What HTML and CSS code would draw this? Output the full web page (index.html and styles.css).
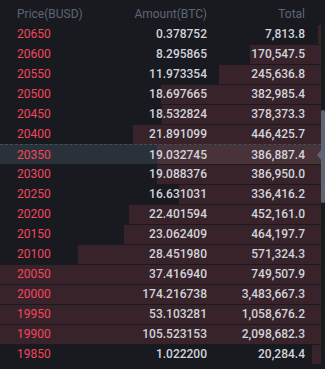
FILE: index.html
```html
<!DOCTYPE html>
<html>
<head>
<meta charset="utf-8">
<link rel="stylesheet" href="styles.css">
</head>
<body>
<div class="book">
  <div class="table">
    <div class="head">
      <span>Price(BUSD)</span>
      <span class="r">Amount(BTC)</span>
      <span class="r">Total</span>
    </div>
    <div class="row"><div class="bar" style="width:3px"></div><span class="p">20650</span><span class="r">0.378752</span><span class="r">7,813.8</span></div>
    <div class="row"><div class="bar" style="width:71px"></div><span class="p">20600</span><span class="r">8.295865</span><span class="r">170,547.5</span></div>
    <div class="row"><div class="bar" style="width:102px"></div><span class="p">20550</span><span class="r">11.973354</span><span class="r">245,636.8</span></div>
    <div class="row"><div class="bar" style="width:160px"></div><span class="p">20500</span><span class="r">18.697665</span><span class="r">382,985.4</span></div>
    <div class="row"><div class="bar" style="width:159px"></div><span class="p">20450</span><span class="r">18.532824</span><span class="r">378,373.3</span></div>
    <div class="row"><div class="bar" style="width:188px"></div><span class="p">20400</span><span class="r">21.891099</span><span class="r">446,425.7</span></div>
    <div class="row active"><div class="bar" style="width:164px"></div><span class="p">20350</span><span class="r">19.032745</span><span class="r">386,887.4</span><i class="caret"></i></div>
    <div class="row"><div class="bar" style="width:164px"></div><span class="p">20300</span><span class="r">19.088376</span><span class="r">386,950.0</span></div>
    <div class="row"><div class="bar" style="width:142px"></div><span class="p">20250</span><span class="r">16.631031</span><span class="r">336,416.2</span></div>
    <div class="row"><div class="bar" style="width:192px"></div><span class="p">20200</span><span class="r">22.401594</span><span class="r">452,161.0</span></div>
    <div class="row"><div class="bar" style="width:197px"></div><span class="p">20150</span><span class="r">23.062409</span><span class="r">464,197.7</span></div>
    <div class="row"><div class="bar" style="width:243px"></div><span class="p">20100</span><span class="r">28.451980</span><span class="r">571,324.3</span></div>
    <div class="row"><div class="bar" style="width:321px"></div><span class="p">20050</span><span class="r">37.416940</span><span class="r">749,507.9</span></div>
    <div class="row"><div class="bar" style="width:321px"></div><span class="p">20000</span><span class="r">174.216738</span><span class="r">3,483,667.3</span></div>
    <div class="row"><div class="bar" style="width:321px"></div><span class="p">19950</span><span class="r">53.103281</span><span class="r">1,058,676.2</span></div>
    <div class="row"><div class="bar" style="width:321px"></div><span class="p">19900</span><span class="r">105.523153</span><span class="r">2,098,682.3</span></div>
    <div class="row"><div class="bar" style="width:9px"></div><span class="p">19850</span><span class="r">1.022200</span><span class="r">20,284.4</span></div>
  </div>
  <div class="track"><div class="thumb"></div></div>
</div>
</body>
</html>
```
FILE: styles.css
```css
html, body {
  margin: 0;
  padding: 0;
  background: #181a20;
}
body {
  width: 325px;
  height: 369px;
  overflow: hidden;
  font-family: Roboto, "Liberation Sans", sans-serif;
  font-size: 12px;
}
.book {
  display: flex;
  width: 325px;
}
.table {
  width: 321px;
  display: flex;
  flex-direction: column;
}
.head, .row {
  display: grid;
  grid-template-columns: 90px 100px 98px;
  padding: 0 16px 0 17px;
  align-items: center;
}
.head {
  height: 24px;
  color: #5e6673;
  padding-top: 3px;
  box-sizing: border-box;
}
.r {
  text-align: right;
}
.row {
  position: relative;
  height: 20px;
  color: #d0d4dc;
  font-weight: 500;
}
.row span {
  position: relative;
  z-index: 1;
}
.row .p {
  color: #f6465d;
  font-weight: 400;
}
.bar {
  position: absolute;
  right: 0;
  top: 1px;
  bottom: 0;
  background: #38232a;
}
.row.active {
  background: #2b3139;
  border-top: 1px dashed #474d57;
  height: 20px;
  box-sizing: border-box;
}
.row.active .bar {
  background: #4a3239;
  top: 0;
}
.caret {
  position: absolute;
  right: 0;
  top: 5px;
  width: 0;
  height: 0;
  border-top: 5px solid transparent;
  border-bottom: 5px solid transparent;
  border-right: 4px solid #5e6673;
  z-index: 2;
}
.track {
  width: 4px;
}
.thumb {
  margin-top: 110px;
  height: 93px;
  background: #5e6673;
  border-radius: 2px;
}
```
